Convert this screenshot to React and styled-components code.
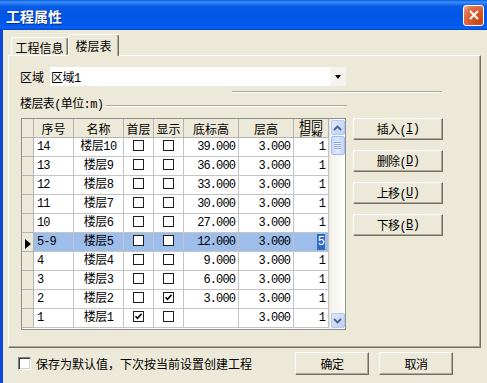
import React from "react"
import styled, { createGlobalStyle } from "styled-components"

const CJK = `"Noto Sans CJK SC", "Liberation Sans", sans-serif`
const MIXED = `"Liberation Mono", "Noto Sans CJK SC", monospace`

const GlobalStyle = createGlobalStyle`
  html, body { margin: 0; padding: 0; background: #ECE9D8; }
  body { font-family: ${CJK}; font-size: 12px; color: #000; }
  * { box-sizing: border-box; }
`

const floors = [
  { no: "14", name: "楼层10", first: false, show: false, base: "39.000", h: "3.000", n: "1" },
  { no: "13", name: "楼层9", first: false, show: false, base: "36.000", h: "3.000", n: "1" },
  { no: "12", name: "楼层8", first: false, show: false, base: "33.000", h: "3.000", n: "1" },
  { no: "11", name: "楼层7", first: false, show: false, base: "30.000", h: "3.000", n: "1" },
  { no: "10", name: "楼层6", first: false, show: false, base: "27.000", h: "3.000", n: "1" },
  { no: "5-9", name: "楼层5", first: false, show: false, base: "12.000", h: "3.000", n: "5", sel: true },
  { no: "4", name: "楼层4", first: false, show: false, base: "9.000", h: "3.000", n: "1" },
  { no: "3", name: "楼层3", first: false, show: false, base: "6.000", h: "3.000", n: "1" },
  { no: "2", name: "楼层2", first: false, show: true, base: "3.000", h: "3.000", n: "1" },
  { no: "1", name: "楼层1", first: true, show: false, base: "", h: "3.000", n: "1" },
]

const Check = ({ on }) => (
  <CheckBox>
    {on && (
      <svg width="9" height="9" viewBox="0 0 9 9">
        <path d="M1.5 4.2 L3.5 6.4 L7.6 1.8" fill="none" stroke="#000" strokeWidth="1.6" />
      </svg>
    )}
  </CheckBox>
)

const Chevron = ({ down }) => (
  <svg width="9" height="6" viewBox="0 0 9 6">
    <path
      d={down ? "M1 1 L4.5 4.5 L8 1" : "M1 5 L4.5 1.5 L8 5"}
      fill="none"
      stroke="#4D6185"
      strokeWidth="1.8"
    />
  </svg>
)

const App = () => (
  <>
    <GlobalStyle />
    <Window>
      <TitleBar>
        <Title>工程属性</Title>
        <CloseButton>
          <svg width="10" height="10" viewBox="0 0 10 10">
            <path d="M1 1 L9 9 M9 1 L1 9" stroke="#fff" strokeWidth="2" />
          </svg>
        </CloseButton>
      </TitleBar>
      <Body>
        <TabStrip>
          <Tab>工程信息</Tab>
          <Tab $active>楼层表</Tab>
        </TabStrip>
        <Panel>
          <RegionRow>
            <RegionLabel>区域</RegionLabel>
            <Combo>
              <ComboText>区域1</ComboText>
              <ComboArrow />
            </Combo>
          </RegionRow>
          <Separator />
          <GroupRow>
            <GroupLabel>楼层表(单位:m)</GroupLabel>
            <GroupLine />
          </GroupRow>
          <ContentRow>
            <Grid>
              <Table>
                <colgroup>
                  <col style={{ width: 12 }} />
                  <col style={{ width: 40 }} />
                  <col style={{ width: 50 }} />
                  <col style={{ width: 30 }} />
                  <col style={{ width: 30 }} />
                  <col style={{ width: 55 }} />
                  <col style={{ width: 55 }} />
                  <col style={{ width: 35 }} />
                </colgroup>
                <thead>
                  <tr>
                    <HeadCell />
                    <HeadCell>序号</HeadCell>
                    <HeadCell>名称</HeadCell>
                    <HeadCell>首层</HeadCell>
                    <HeadCell>显示</HeadCell>
                    <HeadCell>底标高</HeadCell>
                    <HeadCell>层高</HeadCell>
                    <HeadCell>
                      <Clip>相同层数</Clip>
                    </HeadCell>
                  </tr>
                </thead>
                <tbody>
                  {floors.map((f) => (
                    <tr key={f.no}>
                      <Indicator>{f.sel && <Arrow />}</Indicator>
                      <Cell $sel={f.sel} $num>{f.no}</Cell>
                      <Cell $sel={f.sel} $align="center">{f.name}</Cell>
                      <Cell $sel={f.sel} $align="center"><Check on={f.first} /></Cell>
                      <Cell $sel={f.sel} $align="center"><Check on={f.show} /></Cell>
                      <Cell $sel={f.sel} $align="right" $num>{f.base}</Cell>
                      <Cell $sel={f.sel} $align="right" $num>{f.h}</Cell>
                      <Cell $sel={f.sel} $align="right" $num>
                        {f.sel ? <Focus>{f.n}</Focus> : f.n}
                      </Cell>
                    </tr>
                  ))}
                </tbody>
              </Table>
              <ScrollBar>
                <ScrollButton><Chevron /></ScrollButton>
                <Thumb>
                  <Grip />
                  <Grip />
                  <Grip />
                  <Grip />
                </Thumb>
                <ScrollButton $bottom><Chevron down /></ScrollButton>
              </ScrollBar>
            </Grid>
            <SideButtons>
              <Button>插入(<u>I</u>)</Button>
              <Button>删除(<u>D</u>)</Button>
              <Button>上移(<u>U</u>)</Button>
              <Button>下移(<u>B</u>)</Button>
            </SideButtons>
          </ContentRow>
        </Panel>
        <Footer>
          <FooterCheck />
          <FooterLabel>保存为默认值，下次按当前设置创建工程</FooterLabel>
          <DialogButton>确定</DialogButton>
          <DialogButton>取消</DialogButton>
        </Footer>
      </Body>
    </Window>
  </>
)

export default App

const Window = styled.div`
  width: 487px;
  height: 383px;
  display: flex;
  flex-direction: column;
  overflow: hidden;
  background: #ECE9D8;
`

const TitleBar = styled.div`
  height: 30px;
  flex: none;
  display: flex;
  align-items: center;
  justify-content: space-between;
  padding: 0 3px 0 6px;
  background: linear-gradient(180deg, #0A5FE4 0%, #3D8EF8 7%, #0A5DE8 20%, #0055E5 45%, #0159EE 85%, #0A62F0 92%, #0045CF 100%);
`

const Title = styled.span`
  color: #fff;
  font-family: ${CJK};
  font-size: 14px;
  font-weight: bold;
  letter-spacing: 0px;
  text-shadow: 1px 1px #0A2A8C;
  margin-top: 1px;
`

const CloseButton = styled.div`
  width: 21px;
  height: 21px;
  border: 1px solid #fff;
  border-radius: 3px;
  display: flex;
  align-items: center;
  justify-content: center;
  background: radial-gradient(circle at 85% 85%, #C84512 0%, #DA5A2C 50%, #E27552 75%, #F2B9A2 100%);
`

const Body = styled.div`
  flex: 1;
  border-left: 3px solid #0B4AD6;
  padding: 4px 6px 0 5px;
  display: flex;
  flex-direction: column;
`

const TabStrip = styled.div`
  height: 21px;
  display: flex;
  align-items: flex-end;
  padding-left: 3px;
  position: relative;
  z-index: 1;
`

const Tab = styled.div`
  width: ${(p) => (p.$active ? 51 : 57)}px;
  height: ${(p) => (p.$active ? 22 : 18)}px;
  margin-bottom: ${(p) => (p.$active ? -1 : 0)}px;
  background: #ECE9D8;
  border: 1px solid;
  border-color: #fff #716F64 transparent #fff;
  border-bottom: none;
  border-radius: 3px 3px 0 0;
  box-shadow: inset -1px 0 #ACA899;
  display: flex;
  align-items: center;
  justify-content: center;
  font-size: 12px;
  padding-top: ${(p) => (p.$active ? 0 : 2)}px;
`

const Panel = styled.div`
  height: 293px;
  flex: none;
  border: 1px solid;
  border-color: #fff #716F64 #716F64 #fff;
  box-shadow: inset -1px -1px #ACA899;
  padding: 11px 0 0 11px;
`

const RegionRow = styled.div`
  height: 19px;
  display: flex;
  align-items: center;
`

const RegionLabel = styled.span`
  width: 30px;
  font-size: 12px;
`

const Combo = styled.div`
  width: 296px;
  height: 19px;
  background: #fff;
  display: flex;
  align-items: center;
`

const ComboText = styled.span`
  flex: 1;
  padding-left: 1px;
  font-family: ${MIXED};
  font-size: 12px;
  letter-spacing: -0.5px;
`

const ComboArrow = styled.div`
  width: 16px;
  height: 100%;
  background: #F4F3EE;
  display: flex;
  align-items: center;
  justify-content: center;
  &::after {
    content: "";
    border-left: 3.5px solid transparent;
    border-right: 3.5px solid transparent;
    border-top: 4px solid #000;
  }
`

const Separator = styled.div`
  margin: 5px 0 0 212px;
  width: 210px;
  border-top: 1px solid #ACA899;
  border-bottom: 1px solid #fff;
`

const GroupRow = styled.div`
  width: 327px;
  height: 14px;
  margin-top: 3px;
  display: flex;
  align-items: center;
`

const GroupLabel = styled.span`
  font-family: ${MIXED};
  font-size: 12px;
  letter-spacing: -0.6px;
  white-space: nowrap;
`

const GroupLine = styled.div`
  flex: 1;
  margin: 5px 0 0 3px;
  border-top: 1px solid #ACA899;
  border-bottom: 1px solid #fff;
`

const ContentRow = styled.div`
  margin-top: 8px;
  padding-left: 1px;
  display: flex;
  align-items: flex-start;
  gap: 7px;
`

const Grid = styled.div`
  width: 325px;
  height: 212px;
  border: 1px solid #8E8E8E;
  background: #fff;
  display: flex;
`

const Table = styled.table`
  width: 307px;
  table-layout: fixed;
  border-collapse: separate;
  border-spacing: 0;
  align-self: flex-start;
  tr {
    height: 19px;
  }
`

const HeadCell = styled.th`
  padding: 0;
  height: 19px;
  background: #ECE9D8;
  border-right: 1px solid #B4B4B4;
  border-bottom: 1px solid #B4B4B4;
  font-weight: normal;
  font-size: 12px;
  text-align: center;
  overflow: hidden;
  white-space: nowrap;
`

const Clip = styled.div`
  height: 18px;
  overflow: hidden;
  white-space: normal;
  line-height: 11px;
  padding: 0 4px;
  text-align: center;
`

const Indicator = styled.td`
  padding: 0;
  background: #ECE9D8;
  border-right: 1px solid #B4B4B4;
  border-bottom: 1px solid #B4B4B4;
  text-align: center;
`

const Arrow = styled.span`
  display: inline-block;
  border-top: 5px solid transparent;
  border-bottom: 5px solid transparent;
  border-left: 6px solid #000;
  vertical-align: middle;
  margin-left: 1px;
`

const Cell = styled.td`
  padding: 0 ${(p) => (p.$align === "right" ? 3 : 0)}px 0 ${(p) => (p.$align ? 0 : 3)}px;
  background: ${(p) => (p.$sel ? "#9DBDEA" : "#fff")};
  border-right: 1px solid #C4C4C4;
  border-bottom: 1px solid #C4C4C4;
  text-align: ${(p) => p.$align || "left"};
  font-family: ${MIXED};
  font-size: 12px;
  letter-spacing: ${(p) => (p.$num ? "-0.9px" : "-0.5px")};
  line-height: 18px;
  white-space: nowrap;
  overflow: hidden;
`

const Focus = styled.span`
  background: #316AC5;
  color: #fff;
  padding: 1px 1px;
`

const CheckBox = styled.span`
  display: inline-flex;
  align-items: center;
  justify-content: center;
  width: 11px;
  height: 11px;
  border: 1px solid #1E1E1E;
  background: #fff;
  vertical-align: middle;
  margin-top: -2px;
`

const ScrollBar = styled.div`
  width: 16px;
  display: flex;
  flex-direction: column;
  align-items: center;
  padding: 1px 0;
  background: linear-gradient(90deg, #F3F1EA, #FEFEFB);
  border-left: 1px solid #E8E6DC;
`

const ScrollButton = styled.div`
  width: 14px;
  height: 15px;
  margin-top: ${(p) => (p.$bottom ? "auto" : "0")};
  border: 1px solid #B5C8F3;
  border-radius: 2px;
  background: linear-gradient(135deg, #E0E9FD, #BCD0F9);
  display: flex;
  align-items: center;
  justify-content: center;
`

const Thumb = styled.div`
  width: 14px;
  height: 19px;
  margin-top: 1px;
  border: 1px solid #A7BDEE;
  border-radius: 2px;
  background: linear-gradient(90deg, #C9D8FC, #DCE6FD 50%, #C3D4FA);
  display: flex;
  flex-direction: column;
  align-items: center;
  justify-content: center;
  gap: 1px;
`

const Grip = styled.div`
  width: 7px;
  height: 1px;
  background: #8CA6E4;
  box-shadow: 0 1px #EEF4FE;
`

const SideButtons = styled.div`
  display: flex;
  flex-direction: column;
  gap: 10px;
`

const Button = styled.div`
  width: 90px;
  height: 22px;
  background: #ECE9D8;
  border: 1px solid;
  border-color: #fff #716F64 #716F64 #fff;
  box-shadow: inset -1px -1px #ACA899;
  display: flex;
  align-items: center;
  justify-content: center;
  font-family: ${MIXED};
  font-size: 12px;
  letter-spacing: -0.6px;
  u {
    text-underline-offset: 1px;
  }
`

const Footer = styled.div`
  height: 23px;
  margin-top: 4px;
  display: flex;
  align-items: center;
  padding-left: 10px;
`

const FooterCheck = styled.div`
  width: 13px;
  height: 13px;
  background: #fff;
  border: 1px solid;
  border-color: #808080 #fff #fff #808080;
  box-shadow: inset 1px 1px #404040, inset -1px -1px #D4D0C8;
`

const FooterLabel = styled.span`
  margin-left: 5px;
  font-size: 12px;
  flex: 1;
`

const DialogButton = styled(Button)`
  width: 74px;
  height: 23px;
  margin-left: 10px;
  &:last-child {
    margin-right: 28px;
  }
`
